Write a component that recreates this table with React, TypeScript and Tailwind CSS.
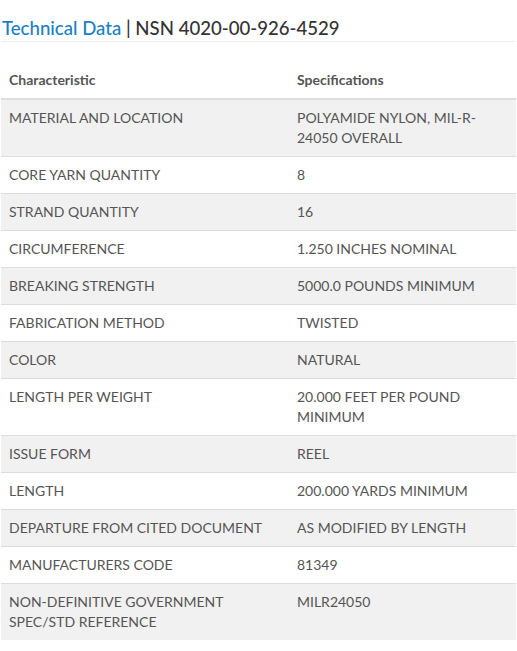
import React from "react";

const rows: [string, string][] = [
  ["MATERIAL AND LOCATION", "POLYAMIDE NYLON, MIL-R-24050 OVERALL"],
  ["CORE YARN QUANTITY", "8"],
  ["STRAND QUANTITY", "16"],
  ["CIRCUMFERENCE", "1.250 INCHES NOMINAL"],
  ["BREAKING STRENGTH", "5000.0 POUNDS MINIMUM"],
  ["FABRICATION METHOD", "TWISTED"],
  ["COLOR", "NATURAL"],
  ["LENGTH PER WEIGHT", "20.000 FEET PER POUND MINIMUM"],
  ["ISSUE FORM", "REEL"],
  ["LENGTH", "200.000 YARDS MINIMUM"],
  ["DEPARTURE FROM CITED DOCUMENT", "AS MODIFIED BY LENGTH"],
  ["MANUFACTURERS CODE", "81349"],
  ["NON-DEFINITIVE GOVERNMENT SPEC/STD REFERENCE", "MILR24050"],
];

export default function App() {
  return (
    <div className="bg-white w-[517px] min-h-[651px] pl-[1px] pr-[1px]" style={{ fontFamily: "Lato, 'Open Sans', sans-serif" }}>
      <h3
        className="mt-[15px] leading-[26px] text-[18.6px] font-medium pl-[1px] border-b border-[#eeeeee] text-[#333333]"
        style={{ fontFamily: "Lato, 'Open Sans', sans-serif" }}
      >
        <span className="text-[#1a7fc4]">Technical Data</span> | NSN 4020-00-926-4529
      </h3>
      <table className="mt-[20px] w-full border-collapse text-[14px] leading-[20px] text-[#555555]">
        <thead>
          <tr className="border-b-2 border-[#dddddd]">
            <th className="text-left font-bold px-[8px] py-[8px] w-[288px] align-top">Characteristic</th>
            <th className="text-left font-bold px-[8px] py-[8px] align-top">Specifications</th>
          </tr>
        </thead>
        <tbody>
          {rows.map(([a, b], i) => (
            <tr key={i} className={(i % 2 === 0 ? "bg-[#f1f1f1]" : "bg-white") + (i < rows.length - 1 ? " border-b border-[#dddddd]" : "")}>
              <td className="px-[8px] py-[8px] align-top pr-[20px]">{a}</td>
              <td className="px-[8px] py-[8px] align-top pr-[20px]">{b}</td>
            </tr>
          ))}
        </tbody>
      </table>
    </div>
  );
}
